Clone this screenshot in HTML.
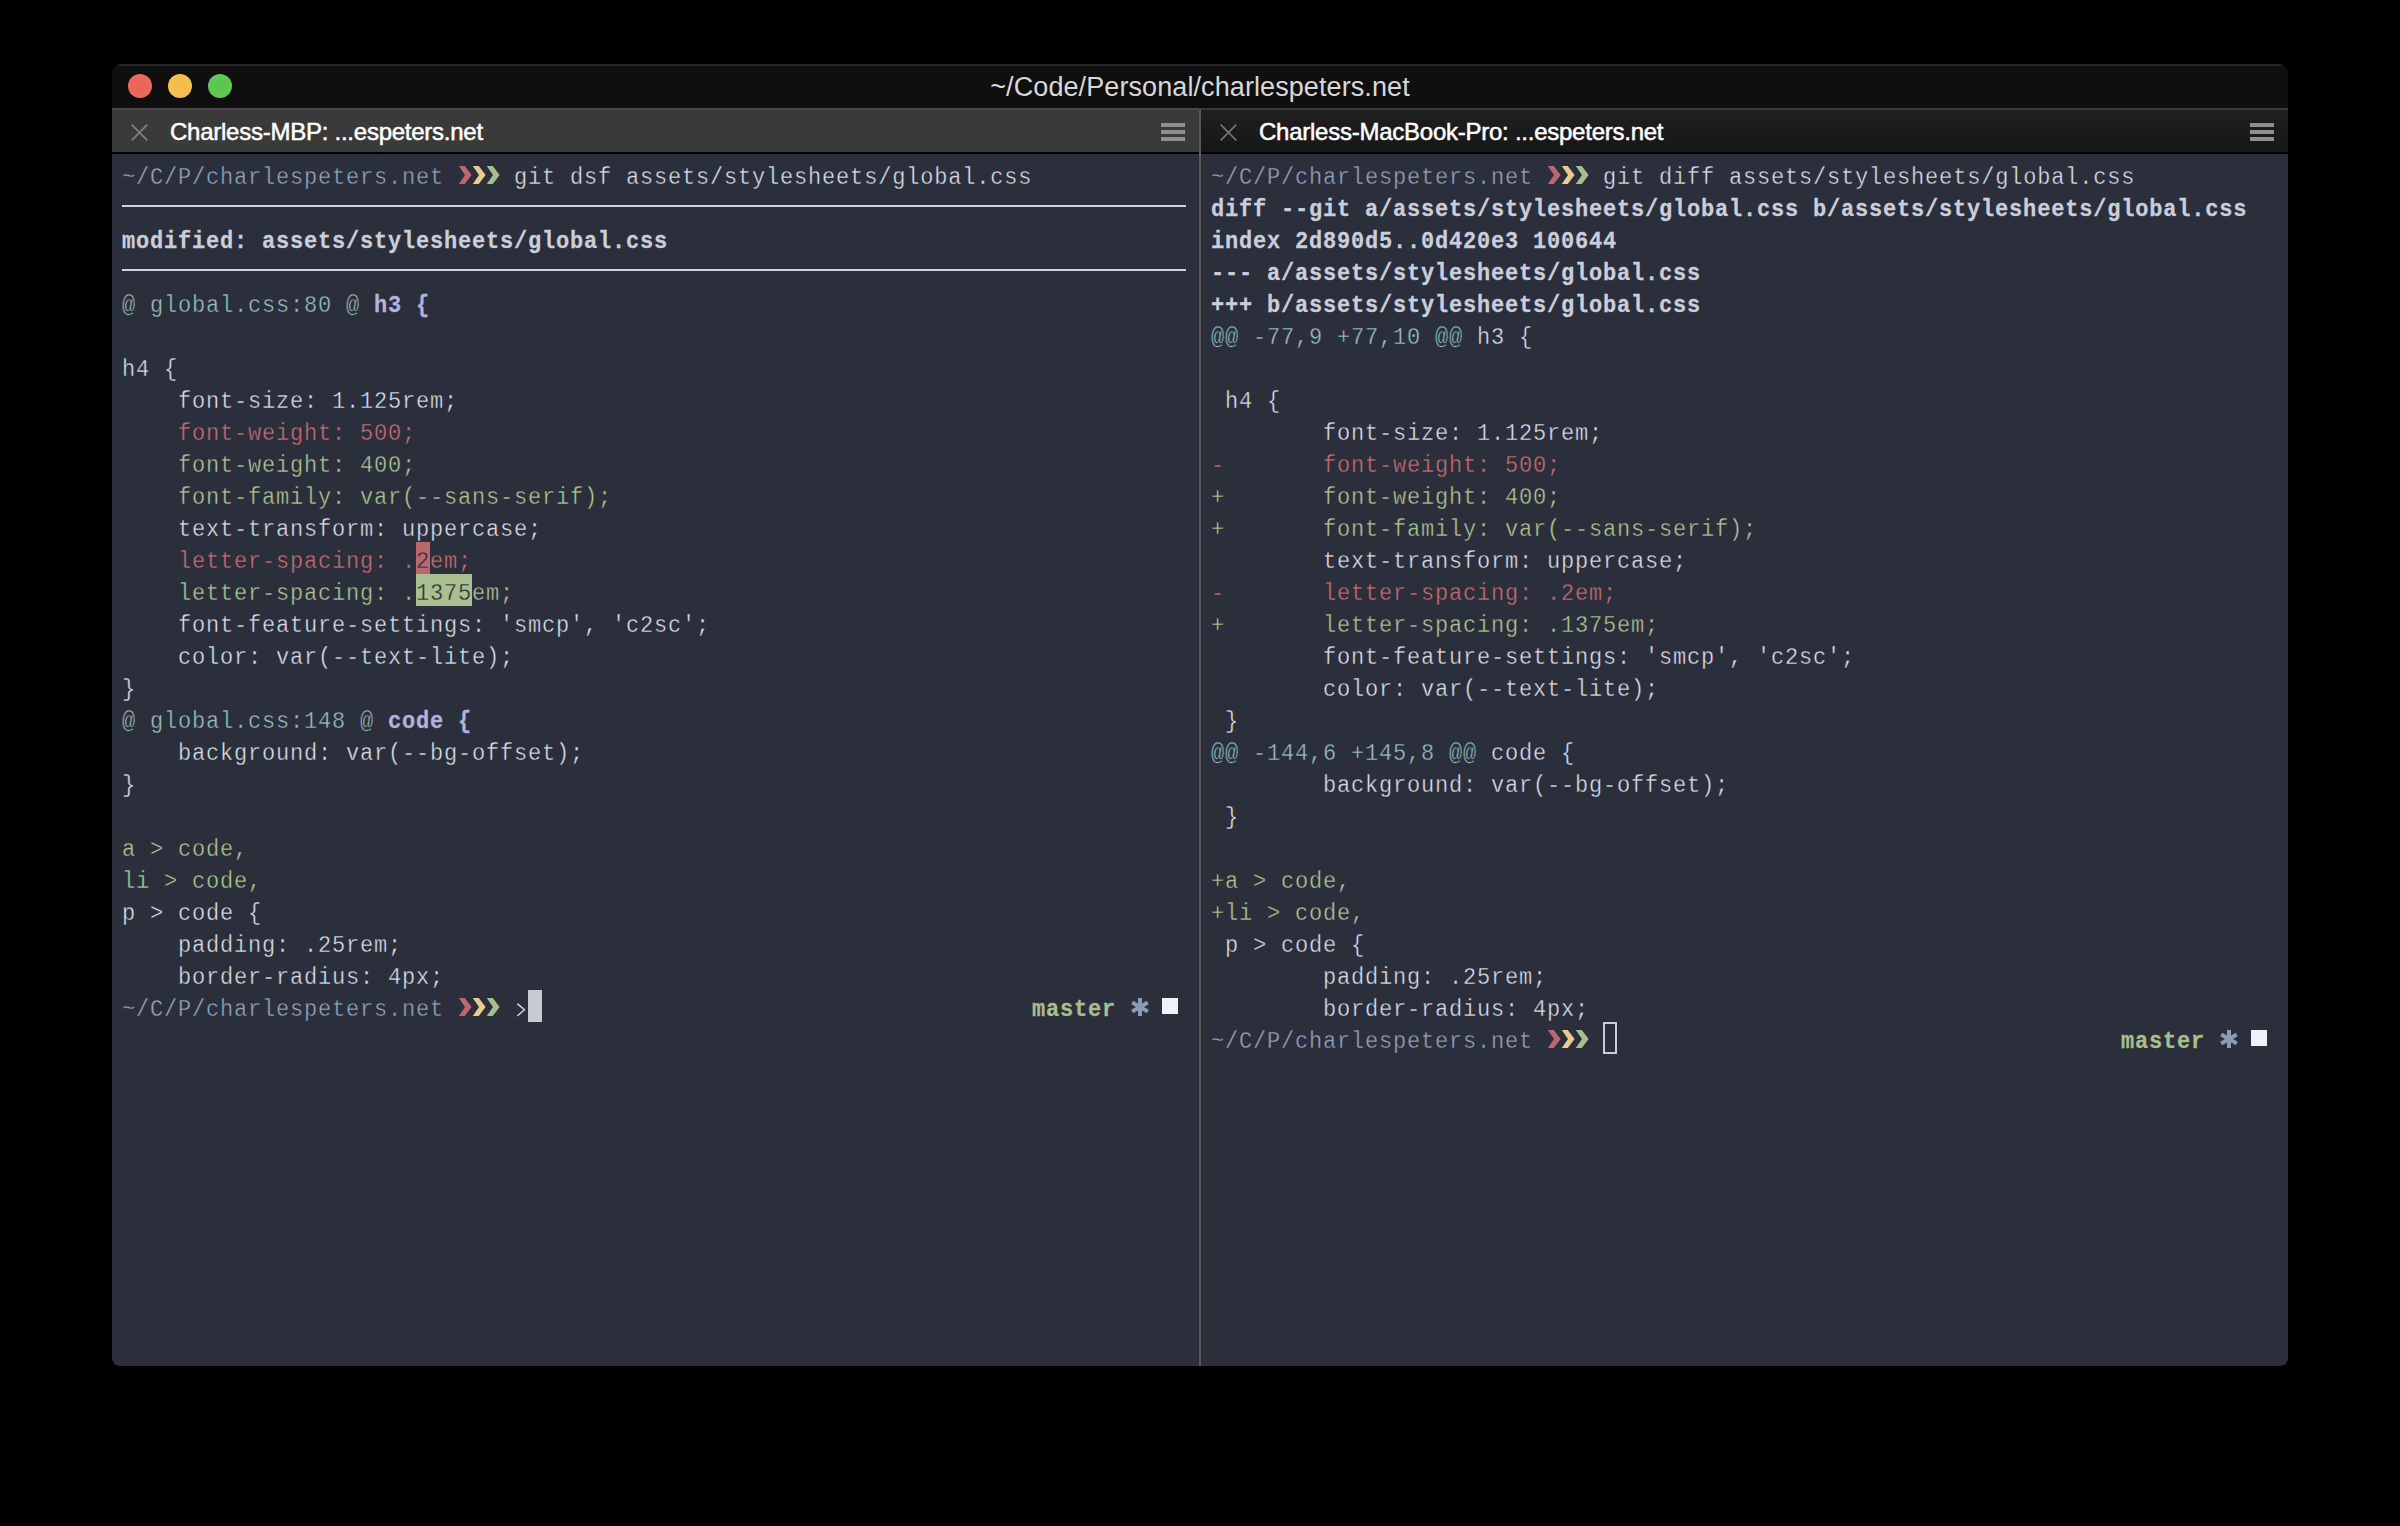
<!DOCTYPE html>
<html><head><meta charset="utf-8"><title>terminal</title>
<style>
html,body{margin:0;padding:0;background:#000;}
body{width:2400px;height:1526px;position:relative;overflow:hidden;font-family:"Liberation Sans",sans-serif;}
#win{position:absolute;left:112px;top:64px;width:2176px;height:1302px;border-radius:10px 10px 8px 8px;overflow:hidden;background:#2b2f3b;}
#tb{position:absolute;left:0;top:0;width:2176px;height:44px;background:#0f0f0f;border-top:2px solid #272727;box-sizing:border-box;}
#tbl{position:absolute;left:0;top:44px;width:2176px;height:2px;background:linear-gradient(90deg,#474747 0 1087px,#3b3b3b 1087px);}
.dot{position:absolute;top:10px;width:24px;height:24px;border-radius:50%;}
#title{position:absolute;left:0;top:7px;width:2176px;text-align:center;color:#d8d8d8;font-size:27px;letter-spacing:0.09px;line-height:32px;white-space:pre;}
#tabL{position:absolute;left:0;top:46px;width:1087px;height:42px;background:#3a3a3a;}
#tabR{position:absolute;left:1089px;top:46px;width:1087px;height:42px;background:linear-gradient(#202020,#161616);}
#tabline{position:absolute;left:0;top:88px;width:2176px;height:2px;background:#000;}
#divider{position:absolute;left:1087px;top:46px;width:2px;height:1256px;background:#585858;}
.tt{position:absolute;top:8px;color:#fff;font-size:24px;letter-spacing:-0.25px;line-height:28px;white-space:pre;-webkit-text-stroke:0.5px #fff;}
.hb{position:absolute;top:13px;width:24px;height:18px;background:linear-gradient(#8e8e8e 0 4px,transparent 4px 7px,#8e8e8e 7px 11px,transparent 11px 14px,#8e8e8e 14px 18px);}
.r{position:absolute;height:32px;line-height:32px;font-family:"Liberation Mono",monospace;font-size:22px;letter-spacing:0.8px;white-space:pre;color:#dadee8;transform-origin:0 21.86px;transform:translateY(5.1px) scaleY(1.09);-webkit-text-stroke:0.35px #2b2f3b;}
.g{position:absolute;}
</style></head>
<body>
<div id="win">
  <div id="tb"></div>
  <div class="dot" style="left:16px;background:radial-gradient(#eb6157,#ee6c61)"></div>
  <div class="dot" style="left:56px;background:radial-gradient(#f3bb4b,#f6c354)"></div>
  <div class="dot" style="left:96px;background:radial-gradient(#5dc350,#64cb58)"></div>
  <div id="title">~/Code/Personal/charlespeters.net</div>
  <div id="tbl"></div>
  <div id="tabL">
    <svg class="g" style="left:18px;top:13px" width="20" height="20" viewBox="0 0 20 20"><path d="M1.7 1.7 L17.3 17.3 M17.3 1.7 L1.7 17.3" stroke="#7f7f7f" stroke-width="1.7" fill="none"/></svg>
    <div class="tt" style="left:58px">Charless-MBP: ...espeters.net</div>
    <div class="hb" style="left:1049px"></div>
  </div>
  <div id="tabR">
    <svg class="g" style="left:18px;top:13px" width="20" height="20" viewBox="0 0 20 20"><path d="M1.7 1.7 L17.3 17.3 M17.3 1.7 L1.7 17.3" stroke="#757575" stroke-width="1.7" fill="none"/></svg>
    <div class="tt" style="left:58px">Charless-MacBook-Pro: ...espeters.net</div>
    <div class="hb" style="left:1049px"></div>
  </div>
  <div id="tabline"></div>
  <div id="divider"></div>
</div>
<div class="g" style="left:416px;top:542px;width:14px;height:32px;background:#bb686d"></div>
<div class="g" style="left:416px;top:574px;width:56px;height:32px;background:#a9bf8f"></div>
<svg class="g" style="left:514px;top:990px" width="14" height="32" viewBox="0 0 14 32"><path d="M3.3 13.6 L10.4 19.8 L3.3 26" fill="none" stroke="#cfd3de" stroke-width="1.5"/></svg>
<div class="r" style="left:122px;top:158px"><span style="color:#92a3bd">~/C/P/charlespeters.net</span>     git dsf assets/stylesheets/global.css</div>
<div class="r" style="left:122px;top:222px"><span style="color:#cacedb;font-weight:bold;-webkit-text-stroke:0.25px #cacedb">modified: assets/stylesheets/global.css</span></div>
<div class="r" style="left:122px;top:286px"><span style="color:#98bfc0">@ global.css:80 @ </span><span style="color:#b4b1dc;font-weight:bold;-webkit-text-stroke:0.25px #b4b1dc">h3 {</span></div>
<div class="r" style="left:122px;top:350px">h4 {</div>
<div class="r" style="left:122px;top:382px">    font-size: 1.125rem;</div>
<div class="r" style="left:122px;top:414px"><span style="color:#c96b72">    font-weight: 500;</span></div>
<div class="r" style="left:122px;top:446px"><span style="color:#adc692">    font-weight: 400;</span></div>
<div class="r" style="left:122px;top:478px"><span style="color:#adc692">    font-family: var(--sans-serif);</span></div>
<div class="r" style="left:122px;top:510px">    text-transform: uppercase;</div>
<div class="r" style="left:122px;top:542px"><span style="color:#c96b72">    letter-spacing: .</span><span style="-webkit-text-stroke-color:#bb686d;color:#2b2f3b">2</span><span style="color:#c96b72">em;</span></div>
<div class="r" style="left:122px;top:574px"><span style="color:#adc692">    letter-spacing: .</span><span style="-webkit-text-stroke-color:#a9bf8f;color:#2b2f3b">1375</span><span style="color:#adc692">em;</span></div>
<div class="r" style="left:122px;top:606px">    font-feature-settings: 'smcp', 'c2sc';</div>
<div class="r" style="left:122px;top:638px">    color: var(--text-lite);</div>
<div class="r" style="left:122px;top:670px">}</div>
<div class="r" style="left:122px;top:702px"><span style="color:#98bfc0">@ global.css:148 @ </span><span style="color:#b4b1dc;font-weight:bold;-webkit-text-stroke:0.25px #b4b1dc">code {</span></div>
<div class="r" style="left:122px;top:734px">    background: var(--bg-offset);</div>
<div class="r" style="left:122px;top:766px">}</div>
<div class="r" style="left:122px;top:830px"><span style="color:#adc692">a &gt; code,</span></div>
<div class="r" style="left:122px;top:862px"><span style="color:#adc692">li &gt; code,</span></div>
<div class="r" style="left:122px;top:894px">p > code {</div>
<div class="r" style="left:122px;top:926px">    padding: .25rem;</div>
<div class="r" style="left:122px;top:958px">    border-radius: 4px;</div>
<div class="r" style="left:122px;top:990px"><span style="color:#92a3bd">~/C/P/charlespeters.net</span></div>
<svg class="g" style="left:458px;top:158px" width="15" height="32" viewBox="0 0 15 32"><polygon points="0.8,8 6.8,8 13.6,17 6.8,26 0.8,26 7,17" fill="#bd676d"/></svg><svg class="g" style="left:472px;top:158px" width="15" height="32" viewBox="0 0 15 32"><polygon points="0.8,8 6.8,8 13.6,17 6.8,26 0.8,26 7,17" fill="#ebcb8b"/></svg><svg class="g" style="left:486px;top:158px" width="15" height="32" viewBox="0 0 15 32"><polygon points="0.8,8 6.8,8 13.6,17 6.8,26 0.8,26 7,17" fill="#a6c08d"/></svg>
<svg class="g" style="left:458px;top:990px" width="15" height="32" viewBox="0 0 15 32"><polygon points="0.8,8 6.8,8 13.6,17 6.8,26 0.8,26 7,17" fill="#bd676d"/></svg><svg class="g" style="left:472px;top:990px" width="15" height="32" viewBox="0 0 15 32"><polygon points="0.8,8 6.8,8 13.6,17 6.8,26 0.8,26 7,17" fill="#ebcb8b"/></svg><svg class="g" style="left:486px;top:990px" width="15" height="32" viewBox="0 0 15 32"><polygon points="0.8,8 6.8,8 13.6,17 6.8,26 0.8,26 7,17" fill="#a6c08d"/></svg>
<div class="r" style="left:1032px;top:990px"><span style="color:#a6bf8c;font-weight:bold;-webkit-text-stroke:0.25px #a6bf8c">master</span></div><svg class="g" style="left:1129px;top:990px" width="22" height="32" viewBox="0 0 22 32"><g stroke="#8a9bb9" stroke-width="4" stroke-linecap="butt"><line x1="11" y1="8" x2="11" y2="26"/><line x1="3.2" y1="12.5" x2="18.8" y2="21.5"/><line x1="3.2" y1="21.5" x2="18.8" y2="12.5"/></g></svg><div class="g" style="left:1162px;top:998px;width:16px;height:16px;background:#f1f2f8"></div>
<div class="g" style="left:122px;top:205px;width:1064px;height:2px;background:#ced2dd"></div>
<div class="g" style="left:122px;top:269px;width:1064px;height:2px;background:#ced2dd"></div>
<div class="g" style="left:528px;top:990px;width:14px;height:32px;background:#c6c9d4"></div>
<div class="r" style="left:1211px;top:158px"><span style="color:#92a3bd">~/C/P/charlespeters.net</span>     git diff assets/stylesheets/global.css</div>
<div class="r" style="left:1211px;top:190px"><span style="color:#cacedb;font-weight:bold;-webkit-text-stroke:0.25px #cacedb">diff --git a/assets/stylesheets/global.css b/assets/stylesheets/global.css</span></div>
<div class="r" style="left:1211px;top:222px"><span style="color:#cacedb;font-weight:bold;-webkit-text-stroke:0.25px #cacedb">index 2d890d5..0d420e3 100644</span></div>
<div class="r" style="left:1211px;top:254px"><span style="color:#cacedb;font-weight:bold;-webkit-text-stroke:0.25px #cacedb">--- a/assets/stylesheets/global.css</span></div>
<div class="r" style="left:1211px;top:286px"><span style="color:#cacedb;font-weight:bold;-webkit-text-stroke:0.25px #cacedb">+++ b/assets/stylesheets/global.css</span></div>
<div class="r" style="left:1211px;top:318px"><span style="color:#98bfc0">@@ -77,9 +77,10 @@</span> h3 {</div>
<div class="r" style="left:1211px;top:382px"> h4 {</div>
<div class="r" style="left:1211px;top:414px">        font-size: 1.125rem;</div>
<div class="r" style="left:1211px;top:446px"><span style="color:#c96b72">-       font-weight: 500;</span></div>
<div class="r" style="left:1211px;top:478px"><span style="color:#adc692">+       font-weight: 400;</span></div>
<div class="r" style="left:1211px;top:510px"><span style="color:#adc692">+       font-family: var(--sans-serif);</span></div>
<div class="r" style="left:1211px;top:542px">        text-transform: uppercase;</div>
<div class="r" style="left:1211px;top:574px"><span style="color:#c96b72">-       letter-spacing: .2em;</span></div>
<div class="r" style="left:1211px;top:606px"><span style="color:#adc692">+       letter-spacing: .1375em;</span></div>
<div class="r" style="left:1211px;top:638px">        font-feature-settings: 'smcp', 'c2sc';</div>
<div class="r" style="left:1211px;top:670px">        color: var(--text-lite);</div>
<div class="r" style="left:1211px;top:702px"> }</div>
<div class="r" style="left:1211px;top:734px"><span style="color:#98bfc0">@@ -144,6 +145,8 @@</span> code {</div>
<div class="r" style="left:1211px;top:766px">        background: var(--bg-offset);</div>
<div class="r" style="left:1211px;top:798px"> }</div>
<div class="r" style="left:1211px;top:862px"><span style="color:#adc692">+a &gt; code,</span></div>
<div class="r" style="left:1211px;top:894px"><span style="color:#adc692">+li &gt; code,</span></div>
<div class="r" style="left:1211px;top:926px"> p > code {</div>
<div class="r" style="left:1211px;top:958px">        padding: .25rem;</div>
<div class="r" style="left:1211px;top:990px">        border-radius: 4px;</div>
<div class="r" style="left:1211px;top:1022px"><span style="color:#92a3bd">~/C/P/charlespeters.net</span></div>
<svg class="g" style="left:1547px;top:158px" width="15" height="32" viewBox="0 0 15 32"><polygon points="0.8,8 6.8,8 13.6,17 6.8,26 0.8,26 7,17" fill="#bd676d"/></svg><svg class="g" style="left:1561px;top:158px" width="15" height="32" viewBox="0 0 15 32"><polygon points="0.8,8 6.8,8 13.6,17 6.8,26 0.8,26 7,17" fill="#ebcb8b"/></svg><svg class="g" style="left:1575px;top:158px" width="15" height="32" viewBox="0 0 15 32"><polygon points="0.8,8 6.8,8 13.6,17 6.8,26 0.8,26 7,17" fill="#a6c08d"/></svg>
<svg class="g" style="left:1547px;top:1022px" width="15" height="32" viewBox="0 0 15 32"><polygon points="0.8,8 6.8,8 13.6,17 6.8,26 0.8,26 7,17" fill="#bd676d"/></svg><svg class="g" style="left:1561px;top:1022px" width="15" height="32" viewBox="0 0 15 32"><polygon points="0.8,8 6.8,8 13.6,17 6.8,26 0.8,26 7,17" fill="#ebcb8b"/></svg><svg class="g" style="left:1575px;top:1022px" width="15" height="32" viewBox="0 0 15 32"><polygon points="0.8,8 6.8,8 13.6,17 6.8,26 0.8,26 7,17" fill="#a6c08d"/></svg>
<div class="r" style="left:2121px;top:1022px"><span style="color:#a6bf8c;font-weight:bold;-webkit-text-stroke:0.25px #a6bf8c">master</span></div><svg class="g" style="left:2218px;top:1022px" width="22" height="32" viewBox="0 0 22 32"><g stroke="#8a9bb9" stroke-width="4" stroke-linecap="butt"><line x1="11" y1="8" x2="11" y2="26"/><line x1="3.2" y1="12.5" x2="18.8" y2="21.5"/><line x1="3.2" y1="21.5" x2="18.8" y2="12.5"/></g></svg><div class="g" style="left:2251px;top:1030px;width:16px;height:16px;background:#f1f2f8"></div>
<div class="g" style="left:1603px;top:1022px;width:14px;height:32px;box-sizing:border-box;border:2px solid #c9ccda"></div>
</body></html>
